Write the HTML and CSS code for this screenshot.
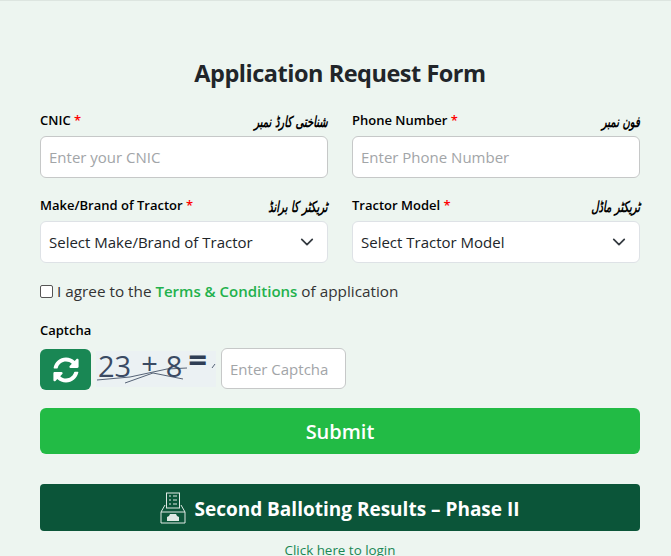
FILE: index.html
```html
<!DOCTYPE html>
<html lang="en">
<head>
    <meta charset="UTF-8">
    <meta name="viewport" content="width=device-width, initial-scale=1.0">
    <link rel="stylesheet" href="styles.css">
    <title>Application Request Form</title>
</head>
<body>
    <div class="page">
        <h1 class="form-title">Application Request Form</h1>
        <form class="form-grid">
            <div class="field">
                <div class="label-row">
                    <label>CNIC <span class="req">*</span></label>
                    <span class="urdu" dir="rtl" lang="ur">شناختی کارڈ نمبر</span>
                </div>
                <input class="text-input" type="text" placeholder="Enter your CNIC">
            </div>
            <div class="field">
                <div class="label-row">
                    <label>Phone Number <span class="req">*</span></label>
                    <span class="urdu" dir="rtl" lang="ur">فون نمبر</span>
                </div>
                <input class="text-input" type="text" placeholder="Enter Phone Number">
            </div>
            <div class="field">
                <div class="label-row">
                    <label>Make/Brand of Tractor <span class="req">*</span></label>
                    <span class="urdu" dir="rtl" lang="ur">ٹریکٹر کا برانڈ</span>
                </div>
                <div class="select-box">
                    <span>Select Make/Brand of Tractor</span>
                    <svg class="chevron" viewBox="0 0 16 16"><path d="M2 5l6 6 6-6" fill="none" stroke="#343a40" stroke-width="2" stroke-linecap="round" stroke-linejoin="round"/></svg>
                </div>
            </div>
            <div class="field">
                <div class="label-row">
                    <label>Tractor Model <span class="req">*</span></label>
                    <span class="urdu" dir="rtl" lang="ur">ٹریکٹر ماڈل</span>
                </div>
                <div class="select-box">
                    <span>Select Tractor Model</span>
                    <svg class="chevron" viewBox="0 0 16 16"><path d="M2 5l6 6 6-6" fill="none" stroke="#343a40" stroke-width="2" stroke-linecap="round" stroke-linejoin="round"/></svg>
                </div>
            </div>
        </form>
        <div class="agree">
            <span class="checkbox"></span>
            <span>I agree to the <a class="terms" href="#">Terms &amp; Conditions</a> of application</span>
        </div>
        <div class="captcha-label">Captcha</div>
        <div class="captcha-row">
            <button class="refresh" type="button">
                <svg viewBox="0 0 512 512" width="26" height="26"><path fill="#fff" d="M370.7 133.3C339.5 104 298.9 88 255.800 88c-77.500.100-144.300 53.200-162.800 126.900-1.300 5.400-6.100 9.200-11.700 9.200H24.100c-7.500 0-13.200-6.800-11.800-14.200C33.900 94.900 134.800 8 256 8c66.400 0 126.800 26.100 171.300 68.700L463 41C478.100 25.900 504 36.600 504 57.900V192c0 13.300-10.700 24-24 24H345.900c-21.400 0-32.100-25.900-17-41l41.800-41.700zM32 296h134.100c21.400 0 32.100 25.900 17 41l-41.800 41.800c31.300 29.300 71.800 45.300 114.900 45.200 77.400-.100 144.300-53.100 162.800-126.800 1.300-5.400 6.100-9.200 11.700-9.200h57.300c7.500 0 13.200 6.800 11.800 14.200C478.100 417.100 377.200 504 256 504c-66.400 0-126.800-26.100-171.300-68.700L49 471C33.900 486.100 8 475.400 8 454.100V320c0-13.300 10.700-24 24-24z"/></svg>
            </button>
            <div class="captcha-img">
                <span class="cap-digits">23</span>
                <span class="cap-plus">+</span>
                <span class="cap-digits cap-last">8</span>
                <span class="cap-eq">=</span>
                <svg class="cap-noise" viewBox="0 0 120 36"><path d="M1 29l33-3 37-8 20-1M29 32l28-10 30 6M116 17l3-4" fill="none" stroke="#2f3e55" stroke-width="0.8"/></svg>
            </div>
            <input class="text-input captcha-input" type="text" placeholder="Enter Captcha">
        </div>
        <button class="submit-btn" type="button">Submit</button>
        <button class="results-btn" type="button">
            <svg viewBox="0 0 26 32" width="26" height="32">
                <g fill="none" stroke="#dfe9e4" stroke-width="1">
                    <rect x="6.500" y="1" width="13" height="15" fill="#0b5539"/>
                    <path d="M9 4h2M9 8h2M9 12h2M13 4h4M13 8h4M13 12h4"/>
                    <path d="M5 13L1 20v11h24V20l-4-7"/>
                    <path d="M1 20h24"/>
                </g>
                <path fill="#dfe9e4" d="M7 29v-4l2-1 1-2h6l1 2 2 1v4z"/>
            </svg>
            <span class="results-text">Second Balloting Results – Phase II</span>
        </button>
        <a class="login-link" href="#">Click here to login</a>
    </div>
</body>
</html>
```

FILE: styles.css
```css
* {
    box-sizing: border-box;
}

html, body {
    height: 100%;
}

body {
    margin: 0;
    background-color: #edf5f0;
    border-top: 1px solid #dde5e0;
    font-family: "Open Sans", "Noto Sans", sans-serif;
    font-size: 15px;
    color: #212529;
    overflow: hidden;
}

.page {
    padding: 0 31px 0 40px;
}

.form-title {
    margin: 0;
    padding-top: 55px;
    font-size: 23.5px;
    letter-spacing: -0.48px;
    line-height: 34px;
    font-weight: 700;
    text-align: center;
    width: 600px;
}

.form-grid {
    display: grid;
    grid-template-columns: 288px 288px;
    column-gap: 24px;
    row-gap: 11px;
    margin-top: 14px;
}

.label-row {
    display: flex;
    justify-content: space-between;
    align-items: center;
    height: 32px;
}

.label-row label {
    font-size: 13px;
    font-weight: 600;
    color: #000;
}

.req {
    color: #f00;
}

/* no nastaliq font here, so squeeze the naskh glyphs to the same width */
.urdu {
    display: inline-block;
    font-family: "DejaVu Sans", sans-serif;
    font-size: 15px;
    font-weight: 700;
    font-style: italic;
    color: #000;
    transform: translateY(2px) scaleX(0.67);
    transform-origin: right center;
}

.text-input {
    display: block;
    width: 100%;
    height: 42px;
    padding: 0 8px;
    background: #fff;
    border: 1px solid #c6c8c8;
    border-radius: 6px;
    font-family: inherit;
    font-size: 15px;
    color: #212529;
}

.text-input::placeholder {
    color: #a2a5a8;
}

.select-box {
    display: flex;
    align-items: center;
    justify-content: space-between;
    height: 42px;
    padding: 0 13px 0 8px;
    background: #fff;
    border: 1px solid #dee2e6;
    border-radius: 6px;
    font-size: 15px;
}

.chevron {
    width: 14px;
    height: 14px;
}

.agree {
    display: flex;
    align-items: center;
    gap: 4px;
    margin-top: 16px;
    height: 24px;
    font-size: 15.3px;
    color: #333;
}

.checkbox {
    width: 13px;
    height: 13px;
    background: #fff;
    border: 1px solid #555;
    border-radius: 2px;
}

.terms {
    color: #22b14c;
    font-size: 15px;
    font-weight: 600;
    text-decoration: none;
}

.captcha-label {
    margin-top: 17px;
    height: 20px;
    line-height: 20px;
    font-size: 13px;
    font-weight: 600;
    color: #000;
}

.captcha-row {
    display: flex;
    align-items: flex-end;
    height: 42px;
    margin-top: 8px;
}

.refresh {
    display: flex;
    align-items: center;
    justify-content: center;
    width: 51px;
    height: 41px;
    padding: 0;
    background: #198754;
    border: none;
    border-radius: 6px;
}

.captcha-img {
    position: relative;
    display: flex;
    align-self: center;
    width: 120px;
    height: 36px;
    margin-left: 5px;
    padding-left: 2px;
    background: #ebf1f3;
    font-size: 29px;
    line-height: 30px;
    color: #3a4a63;
    white-space: nowrap;
}

.cap-plus {
    margin-left: 10px;
    transform: translateY(-3px);
}

.cap-last {
    margin-left: 8px;
}

.cap-eq {
    margin-left: 6px;
    font-size: 33px;
    font-weight: 700;
    color: #2f3e55;
    transform: translateY(-6px);
}

.cap-noise {
    position: absolute;
    top: 0;
    left: 0;
    width: 120px;
    height: 36px;
}

.captcha-input {
    width: 125px;
    height: 41px;
    margin-left: 5px;
    align-self: flex-start;
}

.submit-btn {
    display: block;
    width: 600px;
    height: 46px;
    margin-top: 18px;
    background: #22bb45;
    border: none;
    border-radius: 6px;
    color: #fff;
    font-family: inherit;
    font-size: 20px;
    font-weight: 600;
}

.results-btn {
    display: flex;
    align-items: center;
    justify-content: center;
    gap: 8px;
    width: 600px;
    height: 47px;
    margin-top: 30px;
    background: #0b5539;
    border: none;
    border-radius: 4px;
    color: #fff;
    font-family: inherit;
    font-size: 19px;
    font-weight: 700;
}

.results-text {
    padding-top: 2px;
}

.login-link {
    display: block;
    width: 600px;
    margin-top: 10px;
    text-align: center;
    font-size: 13.4px;
    color: #198754;
    text-decoration: none;
}
```
